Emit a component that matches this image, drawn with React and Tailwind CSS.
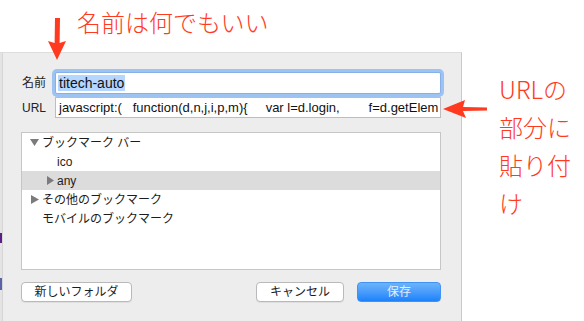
export default function App() {
  const ui = "font-['Liberation_Sans','Noto_Sans_CJK_JP',sans-serif]";
  const red = "font-['Noto_Sans_CJK_JP',sans-serif] font-light text-[#ff3a1e]";
  const TriDown = () => (
    <svg width="9" height="7" viewBox="0 0 9 7" className="shrink-0">
      <path d="M0 0 L9 0 L4.5 7 Z" fill="#7b7b7b" />
    </svg>
  );
  const TriRight = ({ w = 7, h = 9 }) => (
    <svg width={w} height={h} viewBox={`0 0 ${w} ${h}`} className="shrink-0">
      <path d={`M0 0 L${w} ${h / 2} L0 ${h} Z`} fill="#7b7b7b" />
    </svg>
  );
  return (
    <div className={`relative w-[584px] h-[321px] overflow-hidden bg-white ${ui}`}>
      <div className="h-[52px] pl-[77px] pt-[8px]">
        <div className={`${red} text-[24px] leading-[28px]`}>名前は何でもいい</div>
      </div>
      <div className="flex h-[269px]">
        <div className="flex w-[462px] shrink-0 border-t border-r border-t-[#dddddd] border-r-[#c9c9c9] bg-[#ededed]">
          <div className="flex w-[3px] shrink-0 flex-col border-r border-[#d6d6d6] bg-[#e4e4e4]">
            <div className="h-[180px]" />
            <div className="h-[10px] w-[2px] bg-[#5b1d86]" />
            <div className="h-[35px]" />
            <div className="h-[12px] w-[2px] bg-[#5a63a8]" />
          </div>
          <div className="min-w-0 flex-1 pl-[18px] pr-[20px] pt-[19px]">
            <div className="flex h-[22px] items-center">
              <div className="w-[25px] shrink-0 text-right text-[12px] leading-none text-[#222]">名前</div>
              <div className="ml-[9px] flex h-[22px] min-w-0 flex-1 items-center rounded-[2px] border border-[#86b0ea] bg-white pl-[2px] ring-[3px] ring-[#9dc3f3]">
                <span className="bg-[#b4d6ff] px-[1px] text-[14px] leading-[16px] text-[#111]">titech-auto</span>
              </div>
            </div>
            <div className="mt-[3px] flex h-[21px] items-center">
              <div className="w-[25px] shrink-0 text-right text-[12px] leading-none text-[#222]">URL</div>
              <div className="ml-[9px] h-[21px] min-w-0 flex-1 overflow-hidden whitespace-pre border border-[#bdbdbd] bg-white pl-[3px] text-[13px] leading-[19px] text-[#111]">
                {"javascript:(   function(d,n,j,i,p,m){     var l=d.login,        f=d.getElem"}
              </div>
            </div>
            <div className="mt-[14px] h-[138px] border border-[#c6c6c6] bg-white text-[12px] leading-none text-[#1c1c1c]">
              <div className="flex h-[19px] items-center pl-[8px]">
                <TriDown />
                <span className="ml-[3px]">ブックマーク バー</span>
              </div>
              <div className="flex h-[19px] items-center pl-[35px]">ico</div>
              <div className="flex h-[19px] items-center bg-[#dcdcdc] pl-[25px]">
                <TriRight />
                <span className="ml-[3px]">any</span>
              </div>
              <div className="flex h-[19px] items-center pl-[9px]">
                <TriRight w={8} h={9} />
                <span className="ml-[3px]">その他のブックマーク</span>
              </div>
              <div className="flex h-[19px] items-center pl-[20px]">モバイルのブックマーク</div>
            </div>
            <div className="mt-[12px] flex h-[20px]">
              <div className="flex w-[111px] items-center justify-center rounded-[4px] border border-[#b9b9b9] bg-white text-[12px] leading-none text-[#1c1c1c] shadow-[0_1px_0_rgba(0,0,0,0.06)]">
                新しいフォルダ
              </div>
              <div className="flex-1" />
              <div className="flex w-[88px] items-center justify-center rounded-[4px] border border-[#b9b9b9] bg-white text-[12px] leading-none text-[#1c1c1c] shadow-[0_1px_0_rgba(0,0,0,0.06)]">
                キャンセル
              </div>
              <div className="ml-[13px] flex w-[84px] items-center justify-center rounded-[4px] border border-[#3f93f7] bg-linear-to-b from-[#6cb4fb] to-[#1b82fa] text-[12px] leading-none text-[#e3eeff]">
                保存
              </div>
            </div>
          </div>
        </div>
        <div className={`${red} pl-[37px] pt-[18px] text-[24px] leading-[38px]`}>
          <div>URLの</div>
          <div>部分に</div>
          <div>貼り付</div>
          <div>け</div>
        </div>
      </div>
      <svg className="absolute left-[46px] top-[16px]" width="22" height="46" viewBox="0 0 22 46">
        <path d="M9 2 L14 2 L13.6 27 L20 25 L11 44 L2 25 L8.6 27 Z" fill="#ff3a1e" />
      </svg>
      <svg className="absolute left-[440px] top-[98px]" width="50" height="22" viewBox="0 0 50 22">
        <path d="M3 11 L25 2 L23 9 L47 9.5 L47 12.5 L23 13 L26 20 Z" fill="#ff3a1e" />
      </svg>
    </div>
  );
}
